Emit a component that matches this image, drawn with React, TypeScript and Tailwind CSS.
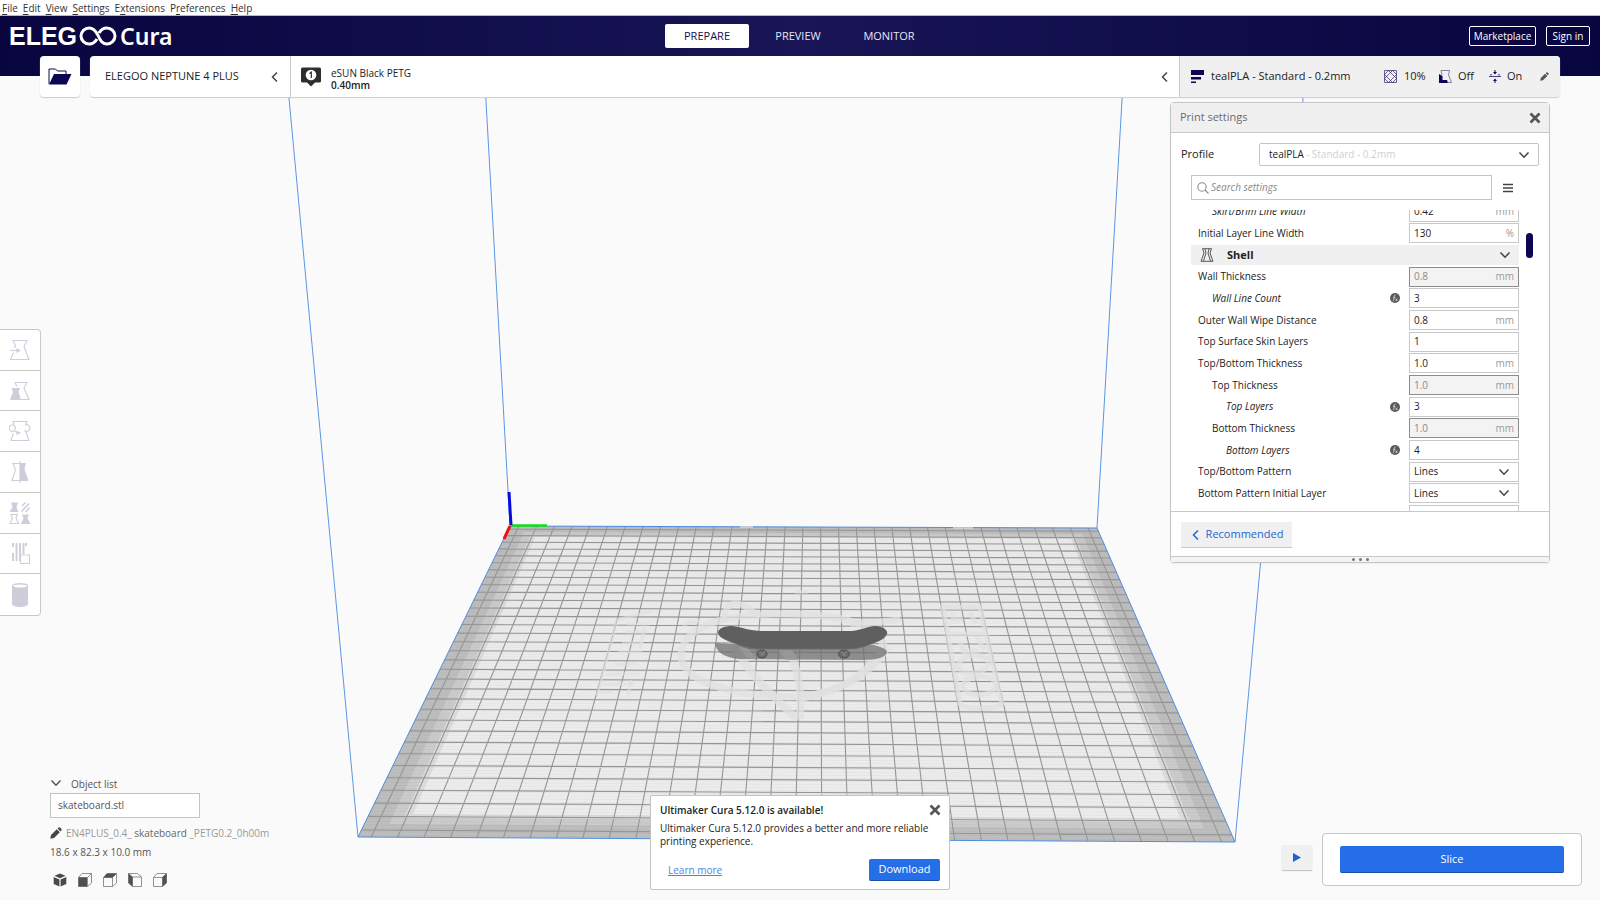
import type { ReactNode } from 'react';

type Pt = [number, number];

/* ---------- build plate projection ---------- */

const TL: Pt = [510, 526];
const TR: Pt = [1097, 528];
const BR: Pt = [1235, 842];
const BL: Pt = [358, 837];
const CELLS = 33;

function solveProjection() {
  const dx1 = TR[0] - BR[0];
  const dx2 = BL[0] - BR[0];
  const dx3 = TL[0] - TR[0] + BR[0] - BL[0];
  const dy1 = TR[1] - BR[1];
  const dy2 = BL[1] - BR[1];
  const dy3 = TL[1] - TR[1] + BR[1] - BL[1];
  const det = dx1 * dy2 - dx2 * dy1;
  const g = (dx3 * dy2 - dx2 * dy3) / det;
  const h = (dx1 * dy3 - dx3 * dy1) / det;
  return {
    a: TR[0] - TL[0] + g * TR[0],
    b: BL[0] - TL[0] + h * BL[0],
    d: TR[1] - TL[1] + g * TR[1],
    e: BL[1] - TL[1] + h * BL[1],
    g,
    h,
  };
}

const P = solveProjection();

function project(u: number, v: number): string {
  const w = P.g * u + P.h * v + 1;
  const x = (P.a * u + P.b * v + TL[0]) / w;
  const y = (P.d * u + P.e * v + TL[1]) / w;
  return `${x.toFixed(1)} ${y.toFixed(1)}`;
}

function inset(cells: number): string {
  const m = cells / CELLS;
  return `M${project(m, m)} L${project(1 - m, m)} L${project(1 - m, 1 - m)} L${project(m, 1 - m)}Z`;
}

const major = Array.from({ length: CELLS }, (_, i) => (i + 0.5) / CELLS);
const minor = Array.from({ length: CELLS * 4 }, (_, i) => (i + 0.5) / (CELLS * 4));
const gridPath = major
  .map((t) => `M${project(t, 0)} L${project(t, 1)} M${project(0, t)} L${project(1, t)}`)
  .join(' ');
const minorPath = minor.map((t) => `M${project(0, t)} L${project(1, t)}`).join(' ');

function Scene() {
  return (
    <svg
      viewBox="0 0 1600 900"
      preserveAspectRatio="xMidYMid slice"
      className="absolute inset-0 h-full w-full"
      aria-hidden="true"
    >
      <path d={inset(0)} fill="#bebebe" />
      <path d={inset(0.95)} fill="#cbcbcb" />
      <path d={inset(1.4)} fill="#dcdcdc" />
      <path d={inset(1.7)} fill="#ececec" />
      <path d={minorPath} stroke="#000" strokeOpacity="0.03" fill="none" />
      <path d={gridPath} stroke="#959595" strokeWidth="1.1" fill="none" />

      {/* emblem printed on the plate */}
      <g fill="none" stroke="#e0e0e0" strokeOpacity="0.75">
        <path d="M886 652 C880 620 830 613 775 614 C715 615 682 630 681 655 C682 682 730 695 790 697 C840 696 872 672 885 640" strokeWidth="7" />
        <path d="M724 622 C724 604 734 600 744 606 L760 616" strokeWidth="6" />
        <path d="M734 645 C745 668 765 690 794 716 L800 715 C802 680 795 655 780 640" strokeWidth="8" />
        <path d="M885 650 C870 675 840 692 800 698" strokeWidth="8" />
        <path d="M850 624 C868 620 880 624 900 619" strokeWidth="6" />
        <path d="M683 624 L700 621" strokeWidth="4" />
        <path d="M795 592 H808" strokeWidth="3" />
        <path d="M870 699 H888" strokeWidth="8" strokeOpacity="0.4" />
      </g>
      <g fill="none" stroke="#e0e0e0" strokeOpacity="0.6" strokeWidth="3">
        <path d="M617 619 L597 696 M617 620 L652 611 M627 624 H650 M645 625 L640 648 M631 680 L628 696" />
        <path d="M626 632 H648 M622 643 H644 M618 652 H642 M614 664 H638 M606 674 H640 M602 684 H634 M600 692 H612" />
      </g>
      <g fill="none" stroke="#e0e0e0" strokeOpacity="0.7" strokeWidth="5">
        <path d="M943 607 H980 L1002 704 C995 710 966 710 960 704 Z" />
        <path d="M953 612 V620 H963 M970 612 L976 624 M950 634 H984 M960 642 L964 652 L978 650 M976 634 L984 650" />
        <path d="M958 666 C958 656 984 650 988 662 C990 674 960 678 958 666 Z" />
        <path d="M963 686 C963 676 992 672 996 684 C998 696 966 700 963 686 Z" />
      </g>

      {/* shadow and model */}
      <path
        d="M715 643 L730 644 L860 643 C874 644 887 648 887 652 C886 657 878 660 862 660 L740 659 C724 658 716 652 715 643Z"
        fill="#6f6f6f"
        fillOpacity="0.75"
      />
      <path d="M738 645 L746 657 L757 660 L748 648Z M778 650 L786 660 L798 660 L792 650Z" fill="#9c9c9c" fillOpacity="0.7" />
      <g fill="#6b6b6b" stroke="#4c4c4c">
        <ellipse cx="762" cy="654" rx="5" ry="4" />
        <ellipse cx="844" cy="654" rx="5.5" ry="4" />
      </g>
      <path d="M759 652 L764 655 M765 651 L761 656 M841 652 L846 656 M847 651 L843 656" stroke="#8a8a8a" />
      <path
        d="M718 632 C719 628 725 626 732 626 C742 627 750 631 762 631 L852 631 C862 630 868 626 876 626 C884 627 888 630 887 634 C885 640 874 643 866 646 C860 648 855 649 848 649 L757 649 C747 648 741 645 733 643 C725 640 718 637 718 632Z"
        fill="#5f5f5f"
      />
      <path d="M738 645 C745 648 750 649 757 649 L848 649 C855 649 860 648 868 645" fill="none" stroke="#6c6c6c" />

      {/* build volume */}
      <path d={inset(0)} fill="none" stroke="#4f8ce0" />
      <path d="M358 837 L286 66 M510 526 L484 66 M1097 528 L1124 66 M1235 842 L1306 66" stroke="#5b96e6" fill="none" />
      <path d="M740 527 H753 M953 528 H973" stroke="#dcd6d0" strokeWidth="1.6" />
      <path d="M510 525.5 H547" stroke="#10e010" strokeWidth="2.6" />
      <path d="M510 526 L504 539" stroke="#ee1111" strokeWidth="3" />
      <path d="M509 492 L511 525" stroke="#0b0bdc" strokeWidth="3" />
    </svg>
  );
}

/* ---------- icons ---------- */

function Chevron({ dir = 'down', className = '' }: { dir?: 'down' | 'left'; className?: string }) {
  return (
    <svg viewBox="0 0 12 12" className={`size-3 shrink-0 ${className}`} fill="none" stroke="currentColor" strokeWidth="1.5" aria-hidden="true">
      <path d={dir === 'down' ? 'M1.5 3.5 L6 8.2 L10.5 3.5' : 'M8 1.5 L3.5 6 L8 10.5'} />
    </svg>
  );
}

function Cross() {
  return (
    <svg viewBox="0 0 12 12" className="size-3" stroke="#555" strokeWidth="2.6" aria-hidden="true">
      <path d="M1.5 1.5 L10.5 10.5 M10.5 1.5 L1.5 10.5" />
    </svg>
  );
}

function Pencil({ className }: { className: string }) {
  return (
    <svg viewBox="0 0 12 12" className={className} fill="currentColor" aria-hidden="true">
      <path d="M0.3 11.7 L1 8 L6.8 2.2 L9.8 5.2 L4 11Z M7.6 1.6 L8.6 0.6 Q9.4 0 10.2 0.7 L11.3 1.8 Q12 2.6 11.4 3.4 L10.4 4.4Z" />
    </svg>
  );
}

function ToolSvg({ children }: { children: ReactNode }) {
  return (
    <svg viewBox="0 0 22 24" className="h-6 w-[22px]" fill="none" stroke="#cfcdda" strokeWidth="1.1" aria-hidden="true">
      {children}
    </svg>
  );
}

const tools: { name: string; icon: ReactNode }[] = [
  {
    name: 'Move',
    icon: (
      <>
        <path d="M5.5 10 L6.5 7.5 L4 2.5 H18 L15 8.5 L20 21.5 H1.5 L4.5 14.5" />
        <path d="M1 12.5 H9" />
        <path d="M7.5 10 L12 12.5 L7.5 15Z" fill="#cfcdda" stroke="none" />
      </>
    ),
  },
  {
    name: 'Scale',
    icon: (
      <>
        <path d="M8 7.5 L6 3.5 H18 L15 9 L20 20.5 H12" />
        <path d="M2.5 9 H11 L9.5 13 L12 21 H1 L4 13Z" fill="#cfcdda" stroke="none" />
      </>
    ),
  },
  {
    name: 'Rotate',
    icon: (
      <>
        <path d="M5 6 L4 2.5 H18 L16.5 6 M4.500 14 L2 21.5 H20 L17 13" />
        <path d="M4.500 6.200 A3.2 3.2 0 1 0 4.500 12.200 A3.2 3.2 0 0 0 4.500 6.200 M16.500 6.200 A3.2 3.2 0 1 1 15.500 11.500" />
        <path d="M5.500 12 L9 14" />
        <path d="M7.5 11.5 L12 14 L7.5 16Z" fill="#cfcdda" stroke="none" />
      </>
    ),
  },
  {
    name: 'Mirror',
    icon: (
      <>
        <path d="M11 3.5 H4 L6.5 10 L3 20.5 H11" />
        <path d="M11 3 H17 L15.5 9 L19.5 21 H11Z" fill="#cfcdda" stroke="none" />
        <path d="M11 1 V23" />
      </>
    ),
  },
  {
    name: 'Per model settings',
    icon: (
      <>
        <path d="M2 1.5 H9 L7.5 6 L9.5 11 H0.5 L3.5 6Z M13 13.5 H20 L18.5 17 L21.5 23 H12 L14.5 17Z" fill="#cfcdda" stroke="none" />
        <path d="M13 5 L16.5 1.5 M12.5 10.5 L20 2.5 M16.5 11 L20.5 6.5" strokeWidth="1.5" />
        <path d="M2 13.5 H8.5 L7 17 L9.5 22.5 H1 L3.5 17Z" />
      </>
    ),
  },
  {
    name: 'Support blocker',
    icon: (
      <>
        <path d="M4 2 V6 M4 12 V20 M7.5 2 V20 M11 2 V20 M14.5 2 V13 M17 2 V5" strokeWidth="1.9" />
        <path d="M11.5 14 H20.5 V22.5 H11.5Z" fill="#fff" />
      </>
    ),
  },
  {
    name: 'Tab anti warping',
    icon: (
      <>
        <path d="M3 3 V21 C3 25 19 25 19 21 V3Z" fill="#cfcdda" stroke="none" />
        <ellipse cx="11" cy="3" rx="7.5" ry="2.2" fill="#fff" strokeWidth="1.4" />
      </>
    ),
  },
];

function Cube({ face }: { face: 'all' | 'front' | 'top' | 'left' | 'right' }) {
  if (face === 'all') {
    return (
      <svg viewBox="0 0 14 14" className="size-[14px]" fill="#4a4a4a" aria-hidden="true">
        <path d="M7 0.5 L12.5 2.8 L7 5.2 L1.5 2.8Z M0.7 4 L6.4 6.4 V13.5 L0.7 11Z M13.3 4 L7.6 6.4 V13.5 L13.3 11Z" />
      </svg>
    );
  }
  const fills = {
    front: 'M0.5 4.5 H9 V13.5 H0.5Z',
    top: 'M0.5 4.5 L4 0.5 H13.5 L9.5 4.5Z',
    left: 'M0.5 0.5 L4.5 4 V13.5 L0.5 10Z',
    right: 'M13.5 0.5 L9.5 4 V13.5 L13.5 10Z',
  };
  const outline =
    face === 'left'
      ? 'M0.5 0.5 H9.5 L13.5 4 V13.5 H4.5 L0.5 10Z M4.5 13.5 V4 L0.5 0.5 M4.5 4 H13.5'
      : 'M0.5 4.5 L4 0.5 H13.5 V10 L9.5 13.5 H0.5Z M0.5 4.5 H9.5 V13.5 M9.5 4.5 L13.5 0.5';
  return (
    <svg viewBox="0 0 14 14" className="size-[14px]" aria-hidden="true">
      <path d={outline} fill="none" stroke="#777" strokeWidth="0.8" />
      <path d={fills[face]} fill="#505050" />
    </svg>
  );
}

function FormulaBadge() {
  return (
    <svg viewBox="0 0 10 10" className="size-[10px] shrink-0" aria-hidden="true">
      <circle cx="5" cy="5" r="5" fill="#5a5a5a" />
      <path d="M5.6 2 C4.2 1.8 4.2 3 4 5 C3.9 6.5 3.8 8 2.8 7.9 M3 4.3 H5.4 M5.6 5.6 L7.4 8 M7.4 5.6 L5.6 8" stroke="#ddd" strokeWidth="0.8" fill="none" />
    </svg>
  );
}

/* ---------- settings list ---------- */

type Row = {
  label: string;
  value: string;
  unit?: string;
  depth?: 0 | 1 | 2;
  changed?: boolean;
  formula?: boolean;
  locked?: boolean;
  options?: boolean;
};

const beforeShell: Row[] = [
  { label: 'Skirt/Brim Line Width', value: '0.42', unit: 'mm', depth: 1, changed: true },
  { label: 'Initial Layer Line Width', value: '130', unit: '%' },
];

const shell: Row[] = [
  { label: 'Wall Thickness', value: '0.8', unit: 'mm', locked: true },
  { label: 'Wall Line Count', value: '3', depth: 1, changed: true, formula: true },
  { label: 'Outer Wall Wipe Distance', value: '0.8', unit: 'mm' },
  { label: 'Top Surface Skin Layers', value: '1' },
  { label: 'Top/Bottom Thickness', value: '1.0', unit: 'mm' },
  { label: 'Top Thickness', value: '1.0', unit: 'mm', depth: 1, locked: true },
  { label: 'Top Layers', value: '3', depth: 2, changed: true, formula: true },
  { label: 'Bottom Thickness', value: '1.0', unit: 'mm', depth: 1, locked: true },
  { label: 'Bottom Layers', value: '4', depth: 2, changed: true, formula: true },
  { label: 'Top/Bottom Pattern', value: 'Lines', options: true },
  { label: 'Bottom Pattern Initial Layer', value: 'Lines', options: true },
];

const indents = ['pl-[7px]', 'pl-[21px]', 'pl-[35px]'];

function SettingRow({ row }: { row: Row }) {
  const id = row.label.toLowerCase().replace(/[^a-z]+/g, '-');
  return (
    <div className="flex items-center text-[10px]">
      <label htmlFor={id} className={`flex-1 truncate ${indents[row.depth ?? 0]} ${row.changed ? 'italic' : ''}`}>
        {row.label}
      </label>
      {row.formula && <FormulaBadge />}
      {row.options ? (
        <div className="ml-[9px] grid h-5 w-[110px] items-center border border-[#c8c8c8] bg-white">
          <select id={id} className="col-start-1 row-start-1 h-full w-full appearance-none px-1 outline-none">
            <option>{row.value}</option>
          </select>
          <Chevron className="pointer-events-none col-start-1 row-start-1 mr-2 justify-self-end text-[#444]" />
        </div>
      ) : (
        <div
          className={`ml-[9px] flex h-5 w-[110px] items-center border px-1 ${
            row.locked ? 'border-[#8c8c8c] bg-[#f3f3f3] text-[#8a8a8a]' : 'border-[#c8c8c8] bg-white'
          }`}
        >
          <input id={id} defaultValue={row.value} disabled={row.locked} className="w-0 flex-1 outline-none" />
          <span className="text-[#9a9a9a]">{row.unit}</span>
        </div>
      )}
    </div>
  );
}

function PrintSettings() {
  return (
    <section className="mt-[5px] mr-[50px] flex w-[380px] flex-col self-start rounded-sm border border-[#c4c4c4] bg-white shadow-xs">
      <div className="flex h-[30px] items-center justify-between border-b border-[#c8c8c8] bg-[#f0f0f0] pr-2 pl-[9px] text-[11px] text-[#6b6b6b]">
        <h2>Print settings</h2>
        <button aria-label="Close print settings">
          <Cross />
        </button>
      </div>
      <div className="mx-[10px] mt-[10px] flex items-center text-[11px]">
        <label htmlFor="profile" className="flex-1">
          Profile
        </label>
        <div className="grid h-[23px] w-[280px] items-center rounded-xs border border-[#c4c4c4] text-[10px]">
          <select id="profile" className="col-start-1 row-start-1 h-full w-full appearance-none px-[9px] outline-none">
            <option>tealPLA</option>
          </select>
          <span className="pointer-events-none col-start-1 row-start-1 pl-[46px] text-[#d0d0d0]">- Standard - 0.2mm</span>
          <Chevron className="pointer-events-none col-start-1 row-start-1 mr-2 justify-self-end text-[#444]" />
        </div>
      </div>
      <div className="mt-[9px] ml-5 flex items-center">
        <div className="flex h-[25px] w-[301px] items-center gap-[2px] border border-[#c4c4c4] pl-[5px]">
          <svg viewBox="0 0 12 12" className="size-3" fill="none" stroke="#8a8a8a" strokeWidth="1.1" aria-hidden="true">
            <circle cx="5" cy="5" r="4.2" />
            <path d="M8 8 L11.5 11.5" />
          </svg>
          <input aria-label="Search settings" placeholder="Search settings" className="flex-1 text-[10px] italic outline-none placeholder:text-[#8a8a8a]" />
        </div>
        <button aria-label="Setting visibility" className="ml-[11px]">
          <svg viewBox="0 0 10 10" className="size-[10px]" stroke="#444" strokeWidth="1.5" aria-hidden="true">
            <path d="M0 1.5 H10 M0 5 H10 M0 8.5 H10" />
          </svg>
        </button>
      </div>
      <div className="mt-[10px] flex h-[302px] overflow-hidden border-b border-[#c8c8c8]">
        <div className="-mt-[9px] ml-5 grid h-[325px] w-[328px] auto-rows-fr">
          {beforeShell.map((row) => (
            <SettingRow key={row.label} row={row} />
          ))}
          <button className="my-px flex items-center bg-[#f0f0f0] pr-2 pl-[9px]">
            <svg viewBox="0 0 14 14" className="h-[14px] w-[14px]" fill="none" stroke="#444" strokeWidth="0.9" aria-hidden="true">
              <path d="M2.5 0.7 H11.5 L10 5 L13 13.3 H1 L4 5Z M5 1 L6 5 L3.5 13 M9 1 L8 5 L10.5 13" />
            </svg>
            <span className="flex-1 pl-[13px] text-left text-[11px] font-bold">Shell</span>
            <Chevron className="text-[#444]" />
          </button>
          {shell.map((row) => (
            <SettingRow key={row.label} row={row} />
          ))}
          <div className="flex items-center justify-end">
            <input aria-label="Next setting" className="h-5 w-[110px] border border-[#c8c8c8]" />
          </div>
        </div>
        <div className="mt-[23px] ml-[7px] h-[25px] w-[7px] rounded-full bg-[#0d0753]" />
      </div>
      <div className="px-[10px] pt-[10px] pb-[9px]">
        <button className="flex h-[25px] w-[111px] items-center justify-center gap-1 bg-[#f0f0f0] text-[11px] text-[#2166d1] shadow-[0_1px_0_#c8c8c8]">
          <Chevron dir="left" />
          Recommended
        </button>
      </div>
      <div className="flex h-[6px] items-center justify-center gap-1 border-t border-[#c8c8c8] bg-[#f3f3f3]">
        <i className="size-[3px] rounded-full bg-[#777]" />
        <i className="size-[3px] rounded-full bg-[#777]" />
        <i className="size-[3px] rounded-full bg-[#777]" />
      </div>
    </section>
  );
}

/* ---------- header ---------- */

const menus: [string, string, string][] = [
  ['', 'F', 'ile'],
  ['', 'E', 'dit'],
  ['', 'V', 'iew'],
  ['', 'S', 'ettings'],
  ['E', 'x', 'tensions'],
  ['P', 'r', 'eferences'],
  ['', 'H', 'elp'],
];

function Header() {
  return (
    <header className="relative">
      <nav className="flex h-4 items-center gap-[5px] border-b border-[#b9b9c4] bg-white pl-[2px] text-[10px] leading-none text-[#333]">
        {menus.map(([pre, key, post]) => (
          <button key={key}>
            {pre}
            <span className="underline underline-offset-2">{key}</span>
            {post}
          </button>
        ))}
      </nav>
      <div className="h-[60px] bg-linear-to-r from-[#08053f] via-[#191556] to-[#08053f]">
        <div className="grid h-10 grid-cols-[1fr_auto_1fr] items-center">
          <div className="flex items-center pl-[9px] text-white">
            <span className="font-['Liberation_Sans',sans-serif] text-[25px] leading-none font-bold">ELEG</span>
            <svg viewBox="0 0 38 20" className="ml-[2px] h-5 w-[38px]" fill="none" stroke="#fff" strokeWidth="3" aria-label="OO">
              <path d="M18 13 C16 16.500 13.500 18 10.200 18 A8.2 8 0 0 1 10.200 2 C14.500 2 16.500 4.500 18.800 9 C21.500 15 23.500 18 27.800 18 A8.2 8 0 0 0 27.800 2 C24.500 2 22 3.500 20 7" />
            </svg>
            <span className="pl-[3px] font-['Noto_Sans',sans-serif] text-[23px] leading-none font-semibold">Cura</span>
          </div>
          <nav className="flex items-center gap-[7px] pr-1 text-[11px] text-[#e6e6f5]">
            <button className="h-6 w-[84px] rounded-xs bg-white text-[#140f50]">PREPARE</button>
            <button className="h-6 w-[84px]">PREVIEW</button>
            <button className="h-6 w-[84px]">MONITOR</button>
          </nav>
          <div className="flex justify-end gap-[10px] pr-[10px] text-[10px] text-white">
            <button className="h-5 w-[67px] rounded-xs border border-white">Marketplace</button>
            <button className="h-5 w-[44px] rounded-xs border border-white">Sign in</button>
          </div>
        </div>
      </div>
    </header>
  );
}

function StageBar() {
  return (
    <div className="relative mx-10 -mt-5 flex h-[41px] gap-[10px]">
      <button aria-label="Open file" className="flex w-10 items-center justify-center rounded-sm bg-white shadow-[0_1px_1px_#ccc]">
        <svg viewBox="0 0 24 17" className="h-[17px] w-6" aria-hidden="true">
          <path d="M1 16 V1 H7.5 L9.5 3 H18 V6" fill="none" stroke="#0d0753" />
          <path d="M1 16.5 L6 6 H23.5 L18.5 16.5Z" fill="#0d0753" />
        </svg>
      </button>
      <div className="flex min-w-0 flex-1 rounded-sm bg-white shadow-[0_1px_1px_#ccc]">
        <button className="flex w-[201px] items-center justify-between border-r border-[#c8c8c8] pr-[9px] pl-[15px] text-[11px]">
          ELEGOO NEPTUNE 4 PLUS
          <Chevron dir="left" className="text-[#444]" />
        </button>
        <button className="flex flex-1 items-center pr-2 pl-[10px] text-left text-[10px] leading-[12px]">
          <svg viewBox="0 0 20 20" className="size-5" aria-hidden="true">
            <path d="M1.5 0.5 H18.5 Q20 0.5 20 2 V14 Q20 15.5 18.5 15.5 H14 L10 19.5 L6 15.5 H1.5 Q0 15.5 0 14 V2 Q0 0.5 1.5 0.5Z" fill="#2e2e2e" />
            <circle cx="10" cy="8" r="5.3" fill="#fff" />
            <path d="M8.5 6.5 L10.3 5.2 V11" stroke="#2e2e2e" strokeWidth="1.2" fill="none" />
          </svg>
          <span className="flex-1 pt-1 pl-[10px]">
            eSUN Black PETG
            <b className="block font-semibold">0.40mm</b>
          </span>
          <Chevron dir="left" className="text-[#444]" />
        </button>
        <button className="flex w-[381px] items-center rounded-r-sm border-l border-[#c8c8c8] bg-[#f0f0f0] pr-[11px] pl-[11px] text-[11px]">
          <svg viewBox="0 0 13 13" className="size-[13px]" fill="#0d0753" aria-hidden="true">
            <path d="M0 0 H13 V5 H0Z M0 7 H10 V9.5 H0Z M0 11.5 H5 V13 H0Z" />
          </svg>
          <span className="flex-1 pl-[7px] text-left">tealPLA - Standard - 0.2mm</span>
          <svg viewBox="0 0 13 13" className="size-[13px]" fill="none" stroke="#2b2768" strokeWidth="0.7" aria-hidden="true">
            <path d="M0.5 0.5 H12.5 V12.5 H0.5Z M0.5 4.5 L4.5 0.5 M8.5 0.5 L12.5 4.5 M12.5 8.5 L8.5 12.5 M4.5 12.5 L0.5 8.5 M4.5 0.5 L12.5 8.5 M8.5 0.5 L0.5 8.5 M0.5 4.5 L8.5 12.5 M12.5 4.5 L4.5 12.5" />
          </svg>
          <span className="w-[42px] pl-[7px] text-left">10%</span>
          <svg viewBox="0 0 13 13" className="size-[13px]" aria-hidden="true">
            <path d="M3 5 L2 0.5 H10.5 L9.5 5 L12.5 12.5 H9" fill="none" stroke="#6a6790" strokeWidth="0.8" />
            <path d="M0 4 L3.5 6 V10 H8 L9 13 H0Z" fill="#0d0753" />
          </svg>
          <span className="w-[37px] pl-[6px] text-left">Off</span>
          <svg viewBox="0 0 12 13" className="h-[13px] w-3" fill="#0d0753" aria-hidden="true">
            <path d="M5.5 0 H6.5 V2 H8 L6 4.5 L4 2 H5.5Z M0 6 H12 V6.8 H0Z M6 8.5 L8 11 H6.5 V13 H5.5 V11 H4Z M1 4.5 H3 V5.2 H1Z M9 4.5 H11 V5.2 H9Z" />
          </svg>
          <span className="w-[39px] pl-[6px] text-left">On</span>
          <Pencil className="size-[9px] text-[#555]" />
        </button>
      </div>
    </div>
  );
}

/* ---------- bottom area ---------- */

function ObjectInfo() {
  const faces = ['all', 'front', 'top', 'left', 'right'] as const;
  return (
    <div className="pb-[13px] pl-[50px] text-[10px] text-[#555]">
      <button className="flex h-[17px] items-center gap-2">
        <Chevron className="mb-1" />
        <span className="pl-px">Object list</span>
      </button>
      <div className="flex h-[25px] w-[150px] items-center border border-[#c4c4c4] bg-white px-[7px]">skateboard.stl</div>
      <div className="mt-[6px] flex h-[18px] items-center gap-1">
        <Pencil className="size-3 text-[#444]" />
        <p className="text-[#999]">
          EN4PLUS_0.4_ <span className="text-[#666]">skateboard</span> _PETG0.2_0h00m
        </p>
      </div>
      <p className="mt-[3px] h-[17px]">18.6 x 82.3 x 10.0 mm</p>
      <div className="mt-[11px] flex gap-[11px] pl-[3px]">
        {faces.map((face) => (
          <button key={face} aria-label={`${face} view`}>
            <Cube face={face} />
          </button>
        ))}
      </div>
    </div>
  );
}

function UpdateToast() {
  return (
    <div className="mb-[10px] w-[300px] rounded-xs border border-[#c4c4c4] bg-white pt-[7px] pr-2 pb-2 pl-[9px] text-[10px]">
      <div className="flex items-start justify-between">
        <b className="font-semibold">Ultimaker Cura 5.12.0 is available!</b>
        <button aria-label="Dismiss" className="pt-px">
          <Cross />
        </button>
      </div>
      <p className="mt-1 leading-[13px]">Ultimaker Cura 5.12.0 provides a better and more reliable printing experience.</p>
      <div className="mt-[11px] flex items-center justify-between pr-px pl-2">
        <a href="#learn-more" className="text-[#4a86e0] underline">
          Learn more
        </a>
        <button className="h-[22px] w-[71px] rounded-xs border-b border-[#1c50a8] bg-[#246fe8] text-[11px] text-white">Download</button>
      </div>
    </div>
  );
}

export default function App() {
  return (
    <div className="relative flex min-h-screen flex-col overflow-hidden bg-[#fafafa] font-['Open_Sans',sans-serif] text-[#222]">
      <Scene />
      <Header />
      <StageBar />
      <main className="relative flex flex-1 flex-col justify-between">
        <div className="flex justify-between">
          <div className="mt-[232px] grid h-[287px] w-[41px] auto-rows-fr divide-y divide-[#c8c8c8] self-start rounded-r-sm border border-l-0 border-[#c8c8c8] bg-white">
            {tools.map((tool) => (
              <button key={tool.name} aria-label={tool.name} className="flex items-center justify-center">
                <ToolSvg>{tool.icon}</ToolSvg>
              </button>
            ))}
          </div>
          <PrintSettings />
        </div>
        <div className="grid grid-cols-[1fr_auto_1fr] items-end">
          <ObjectInfo />
          <UpdateToast />
          <div className="mr-[18px] mb-[14px] flex items-start justify-end gap-[10px]">
            <button aria-label="Play" className="mt-3 flex h-[25px] w-[30px] items-center justify-center bg-[#f0f0f0] shadow-[0_1px_1px_#c8c8c8]">
              <svg viewBox="0 0 8 9" className="h-[9px] w-2" fill="#1f5fd0" aria-hidden="true">
                <path d="M0 0 L8 4.5 L0 9Z" />
              </svg>
            </button>
            <div className="w-[260px] rounded-sm border border-[#c8c8c8] bg-white px-[17px] py-3">
              <button className="block h-[27px] w-full rounded-xs border-b border-[#1c50a8] bg-[#246fe8] text-[11px] text-white">Slice</button>
            </div>
          </div>
        </div>
      </main>
    </div>
  );
}
